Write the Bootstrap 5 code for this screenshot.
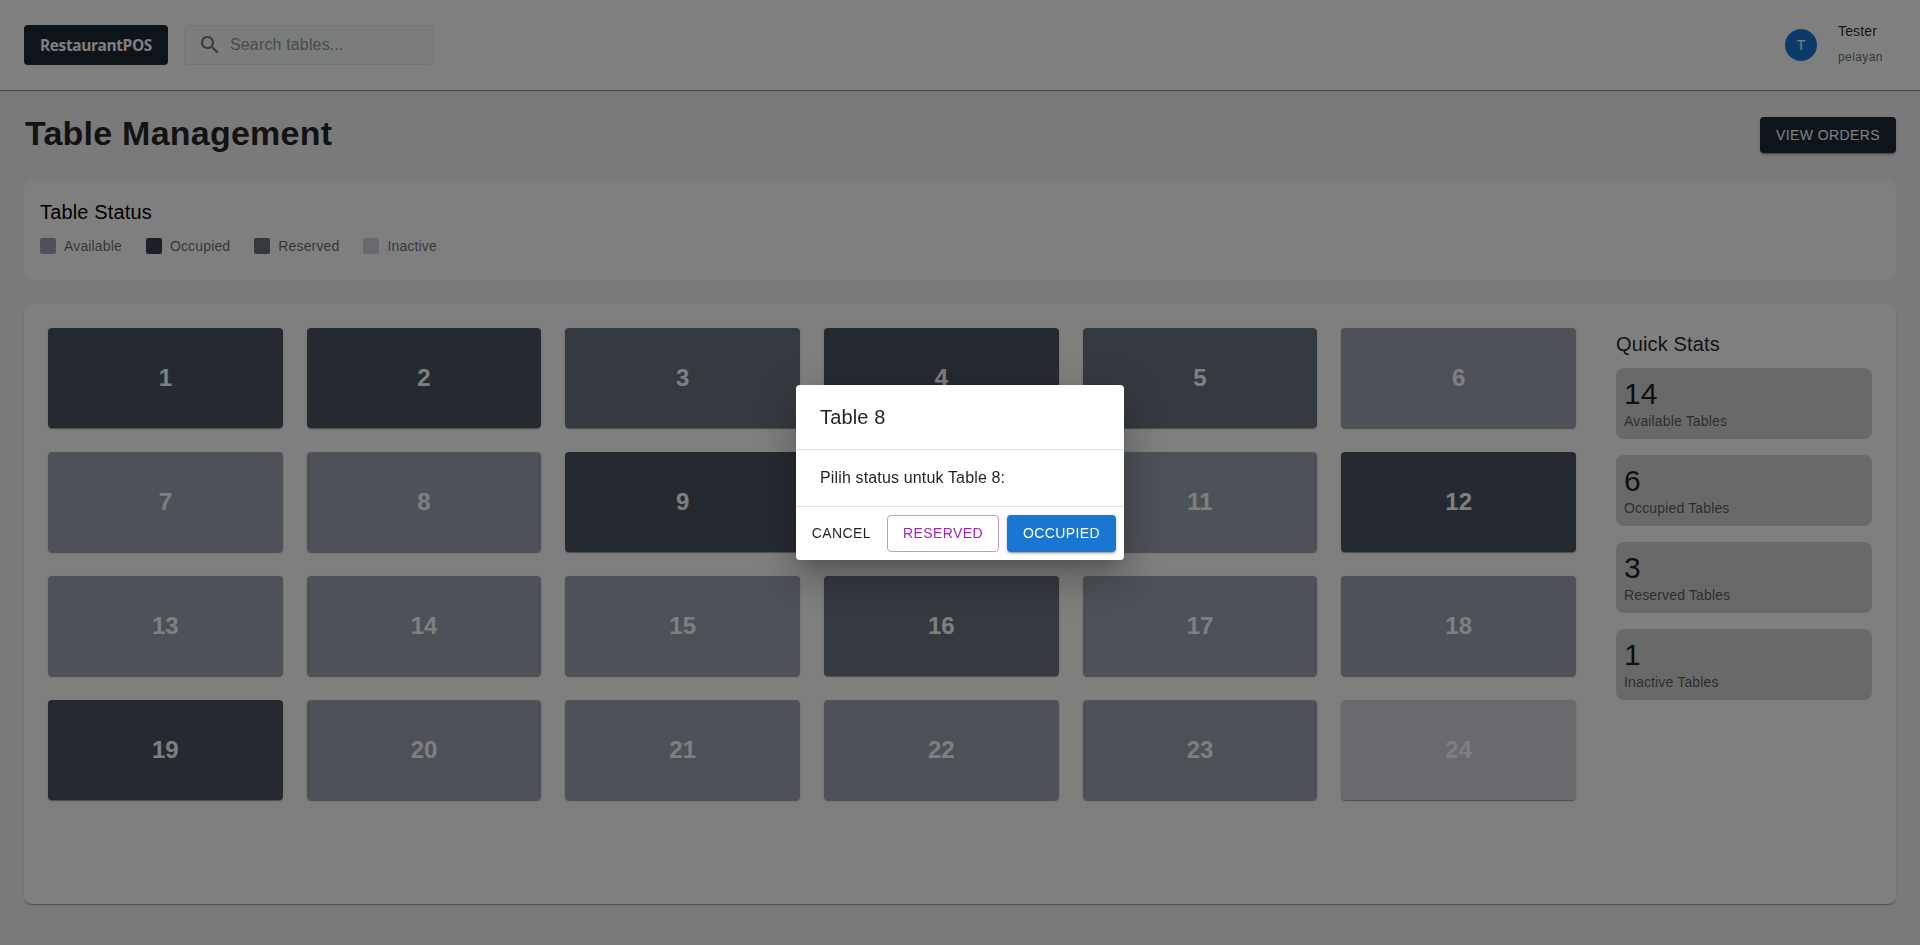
<!DOCTYPE html>
<html lang="en">
<head>
<meta charset="utf-8">
<meta name="viewport" content="width=device-width, initial-scale=1">
<title>RestaurantPOS - Table Management</title>
<link href="https://cdn.jsdelivr.net/npm/bootstrap@5.3.0/dist/css/bootstrap.min.css" rel="stylesheet">
<style>
  body { font-family: "Liberation Sans", Arial, sans-serif; background: #f5f5f5; color: rgba(0,0,0,.87); height: 945px; overflow: hidden; }
  .topbar { height: 90px; background: #fff; box-shadow: 0 2px 1px -1px rgba(0,0,0,.2), 0 1px 1px rgba(0,0,0,.14), 0 1px 3px rgba(0,0,0,.12); }
  .logo { width: 144px; height: 40px; background: #1f2937; color: #fff; border-radius: 4px; font: 700 15.4px/41px "Open Sans", "Noto Sans", sans-serif; letter-spacing: -.35px; }
  .search { width: 250px; height: 40px; background: #f6fbf9; border: 1px solid #e9eded; border-radius: 4px; padding-left: 13px; color: #757575; }
  .search input { border: 0; background: none; outline: 0; width: 190px; padding: 0 0 2px; letter-spacing: .00938em; font-size: 16px; line-height: 23px; }
  .search input::placeholder { color: #929494; opacity: 1; }
  .avatar { width: 32px; height: 32px; background: #1976d2; color: #fff; font-size: 14px; margin-right: 21px; }
  .who { width: 58px; gap: 6px; padding-bottom: 2px; }
  .body2 { font-size: 14px; line-height: 20px; letter-spacing: .01071em; }
  .caption { font-size: 12px; line-height: 20px; letter-spacing: .03333em; }
  .muted { color: rgba(0,0,0,.6); }
  .page-title { font-size: 34px; font-weight: 700; line-height: 39px; padding: 0 0 3px 1px; letter-spacing: .0068em; }
  .title6 { font-size: 20px; font-weight: 400; line-height: 32px; letter-spacing: .0075em; }
  .action { font-size: 14px; line-height: 24.5px; letter-spacing: .02857em; padding: 6px 16px; border: 0; border-radius: 4px; text-transform: uppercase; }
  .raised { box-shadow: 0 3px 1px -2px rgba(0,0,0,.2), 0 2px 2px rgba(0,0,0,.14), 0 1px 5px rgba(0,0,0,.12); }
  .action.ink { background: #1f2937; color: #fff; }
  .action.blue { background: #1976d2; color: #fff; }
  .action.violet { color: #9c27b0; border: 1px solid rgba(156,39,176,.5); padding: 5px 15px; }
  .action.flat { color: rgba(0,0,0,.87); padding: 6px 8px; }
  .legend-panel { height: 100px; background: #fff; border-radius: 8px; color: #000; }
  .swatch { width: 16px; height: 16px; border-radius: 2px; }
  .floor { height: 600px; background: #fff; border-radius: 8px; gap: 40px; }
  .floor, .tile { box-shadow: 0 2px 1px -1px rgba(0,0,0,.2), 0 1px 1px rgba(0,0,0,.14), 0 1px 3px rgba(0,0,0,.12); }
  .tiles { display: grid; grid-template-columns: repeat(6, 1fr); grid-auto-rows: 100px; gap: 24px; }
  .tile { border-radius: 4px; color: #fff; font-size: 24px; font-weight: 700; }
  .available { background: #9ca3af; }
  .occupied { background: #4b5563; }
  .swatch.occupied { background: #374151; }
  .reserved { background: #6b7280; }
  .inactive { background: #d1d5db; }
  .stats { width: 256px; }
  .stat { height: 71px; padding: 8px; background: #d3d3d3; border-radius: 8px; }
  .stat-num { font-size: 30px; line-height: 35px; }
  .modal-backdrop { --bs-backdrop-opacity: .5; }
  .modal .modal-dialog { width: 328px; min-height: 100%; margin: 0 auto; }
  .modal-content { border: 0; border-radius: 4px; color: rgba(0,0,0,.87); box-shadow: 0 11px 15px -7px rgba(0,0,0,.2), 0 24px 38px 3px rgba(0,0,0,.14), 0 9px 46px 8px rgba(0,0,0,.12); }
  .modal-header { padding: 16px 24px; border: 0; }
  .modal-body { padding: 16px 24px; border-top: 1px solid #e0e0e0; border-bottom: 1px solid #e0e0e0; letter-spacing: .00938em; }
  .modal-footer { padding: 8px; border: 0; gap: 8px; }
  .modal-footer > * { margin: 0; }
</style>
</head>
<body class="modal-open">
<header class="topbar d-flex align-items-center px-4">
  <div class="logo text-center">RestaurantPOS</div>
  <div class="search d-flex align-items-center ms-3">
    <svg width="24" height="24" viewBox="0 0 24 24" fill="currentColor" aria-hidden="true"><path d="M15.5 14h-.79l-.28-.27C15.41 12.59 16 11.11 16 9.5 16 5.91 13.09 3 9.5 3S3 5.91 3 9.5 5.91 16 9.5 16c1.61 0 3.09-.59 4.23-1.57l.27.28v.79l5 4.99L20.49 19l-4.99-5zm-6 0C7.01 14 5 11.99 5 9.5S7.01 5 9.5 5 14 7.01 14 9.5 11.99 14 9.5 14z"/></svg>
    <input class="ms-2" type="text" placeholder="Search tables...">
  </div>
  <div class="d-flex align-items-center ms-auto">
    <div class="avatar rounded-circle d-flex align-items-center justify-content-center">T</div>
    <div class="who d-flex flex-column">
      <span class="body2">Tester</span>
      <span class="caption muted">pelayan</span>
    </div>
  </div>
</header>

<main class="p-4 d-flex flex-column gap-4">
  <div class="d-flex align-items-center justify-content-between">
    <h1 class="page-title m-0">Table Management</h1>
    <button class="btn action ink raised" type="button">View Orders</button>
  </div>

  <section class="legend-panel p-3">
    <h2 class="title6 mb-2">Table Status</h2>
    <div class="d-flex gap-4 body2 muted">
      <div class="d-flex align-items-center gap-2"><span class="swatch available"></span>Available</div>
      <div class="d-flex align-items-center gap-2"><span class="swatch occupied"></span>Occupied</div>
      <div class="d-flex align-items-center gap-2"><span class="swatch reserved"></span>Reserved</div>
      <div class="d-flex align-items-center gap-2"><span class="swatch inactive"></span>Inactive</div>
    </div>
  </section>

  <section class="floor p-4 d-flex align-items-start">
    <div class="tiles flex-grow-1">
      <div class="tile occupied d-flex align-items-center justify-content-center">1</div>
      <div class="tile occupied d-flex align-items-center justify-content-center">2</div>
      <div class="tile reserved d-flex align-items-center justify-content-center">3</div>
      <div class="tile occupied d-flex align-items-center justify-content-center">4</div>
      <div class="tile reserved d-flex align-items-center justify-content-center">5</div>
      <div class="tile available d-flex align-items-center justify-content-center">6</div>
      <div class="tile available d-flex align-items-center justify-content-center">7</div>
      <div class="tile available d-flex align-items-center justify-content-center">8</div>
      <div class="tile occupied d-flex align-items-center justify-content-center">9</div>
      <div class="tile occupied d-flex align-items-center justify-content-center">10</div>
      <div class="tile available d-flex align-items-center justify-content-center">11</div>
      <div class="tile occupied d-flex align-items-center justify-content-center">12</div>
      <div class="tile available d-flex align-items-center justify-content-center">13</div>
      <div class="tile available d-flex align-items-center justify-content-center">14</div>
      <div class="tile available d-flex align-items-center justify-content-center">15</div>
      <div class="tile reserved d-flex align-items-center justify-content-center">16</div>
      <div class="tile available d-flex align-items-center justify-content-center">17</div>
      <div class="tile available d-flex align-items-center justify-content-center">18</div>
      <div class="tile occupied d-flex align-items-center justify-content-center">19</div>
      <div class="tile available d-flex align-items-center justify-content-center">20</div>
      <div class="tile available d-flex align-items-center justify-content-center">21</div>
      <div class="tile available d-flex align-items-center justify-content-center">22</div>
      <div class="tile available d-flex align-items-center justify-content-center">23</div>
      <div class="tile inactive d-flex align-items-center justify-content-center">24</div>
    </div>
    <aside class="stats">
      <h2 class="title6 mb-2">Quick Stats</h2>
      <div class="d-flex flex-column gap-3">
        <div class="stat"><div class="stat-num">14</div><div class="body2 muted">Available Tables</div></div>
        <div class="stat"><div class="stat-num">6</div><div class="body2 muted">Occupied Tables</div></div>
        <div class="stat"><div class="stat-num">3</div><div class="body2 muted">Reserved Tables</div></div>
        <div class="stat"><div class="stat-num">1</div><div class="body2 muted">Inactive Tables</div></div>
      </div>
    </aside>
  </section>
</main>

<div class="modal-backdrop show"></div>
<div class="modal d-block" tabindex="-1" role="dialog" aria-modal="true" aria-labelledby="dialogTitle">
  <div class="modal-dialog modal-dialog-centered">
    <div class="modal-content">
      <div class="modal-header"><h2 class="title6 m-0" id="dialogTitle">Table 8</h2></div>
      <div class="modal-body">Pilih status untuk Table 8:</div>
      <div class="modal-footer flex-nowrap">
        <button class="btn action flat" type="button">Cancel</button>
        <button class="btn action violet" type="button">Reserved</button>
        <button class="btn action blue raised" type="button">Occupied</button>
      </div>
    </div>
  </div>
</div>
<script src="https://cdn.jsdelivr.net/npm/bootstrap@5.3.0/dist/js/bootstrap.bundle.min.js"></script>
</body>
</html>
